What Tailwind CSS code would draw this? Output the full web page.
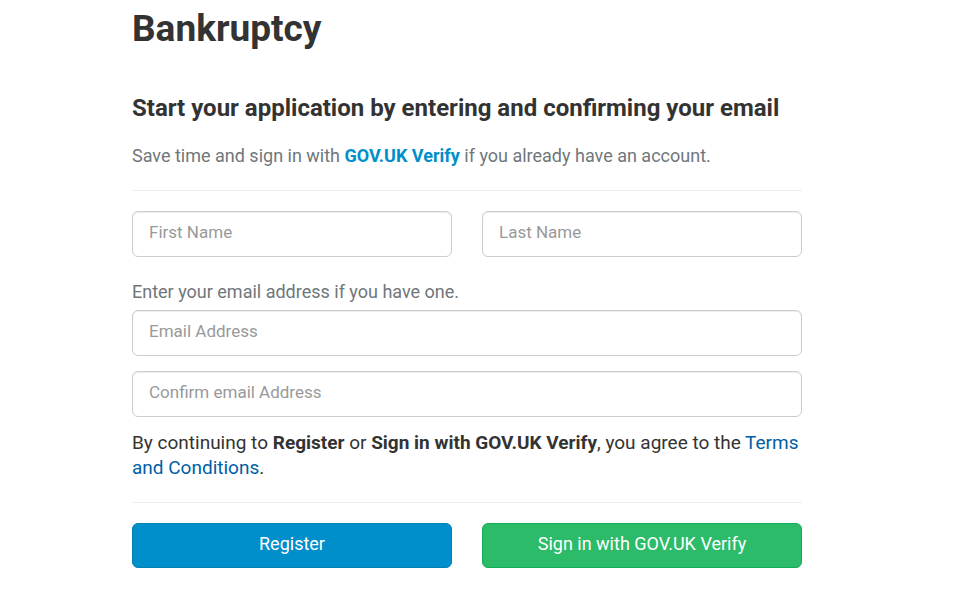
<!DOCTYPE html>
<html lang="en">
<head>
<meta charset="utf-8">
<meta name="viewport" content="width=device-width, initial-scale=1">
<title>Bankruptcy</title>
<script src="https://cdn.jsdelivr.net/npm/@tailwindcss/browser@4"></script>
</head>
<body class="bg-white font-['Roboto',sans-serif] text-lg leading-[25px] text-[#333333]">
<main class="ml-[132px] mr-4 max-w-[670px] pt-[9px] pb-5">
  <h1 class="text-[37px] leading-10 font-bold">Bankruptcy</h1>
  <form class="mt-[43px]">
    <h2 class="text-2xl font-bold">Start your application by entering and confirming your email</h2>
    <p class="mt-[19px] text-[#6f777b]">Save time and sign in with <a href="#" class="font-bold text-[#008fca]">GOV.UK Verify</a> if you already have an account.</p>
    <hr class="mt-[22px] mb-5 border-[#eeeeee]">
    <div class="grid grid-cols-2 gap-[30px]">
      <input type="text" aria-label="First Name" placeholder="First Name" class="h-[46px] w-full rounded-md border border-[#cccccc] px-4 pb-1 text-[17px] placeholder:text-[#999999] shadow-[inset_0_1px_1px_rgba(0,0,0,0.075)]">
      <input type="text" aria-label="Last Name" placeholder="Last Name" class="h-[46px] w-full rounded-md border border-[#cccccc] px-4 pb-1 text-[17px] placeholder:text-[#999999] shadow-[inset_0_1px_1px_rgba(0,0,0,0.075)]">
    </div>
    <label for="email" class="mt-[22px] mb-[6px] block text-[#6f777b]">Enter your email address if you have one.</label>
    <input id="email" type="email" placeholder="Email Address" class="block h-[46px] w-full rounded-md border border-[#cccccc] px-4 pb-1 text-[17px] placeholder:text-[#999999] shadow-[inset_0_1px_1px_rgba(0,0,0,0.075)]">
    <input type="email" aria-label="Confirm email Address" placeholder="Confirm email Address" class="mt-[15px] block h-[46px] w-full rounded-md border border-[#cccccc] px-4 pb-1 text-[17px] placeholder:text-[#999999] shadow-[inset_0_1px_1px_rgba(0,0,0,0.075)]">
    <p class="mt-[13px] text-[19px]">By continuing to <strong>Register</strong> or <strong>Sign in with GOV.UK Verify</strong>, you agree to the <a href="#" class="text-[#005ea5]">Terms <span class="whitespace-nowrap">and Conditions</span></a>.</p>
    <hr class="mt-[22px] mb-5 border-[#eeeeee]">
    <div class="grid grid-cols-2 gap-[30px]">
      <button type="submit" class="h-[45px] rounded-md border border-[#0080b5] bg-[#008fca] pb-1 text-white">Register</button>
      <button type="button" class="h-[45px] rounded-md border border-[#12ab58] bg-[#2bbb69] pb-1 text-white">Sign in with GOV.UK Verify</button>
    </div>
  </form>
</main>
</body>
</html>
